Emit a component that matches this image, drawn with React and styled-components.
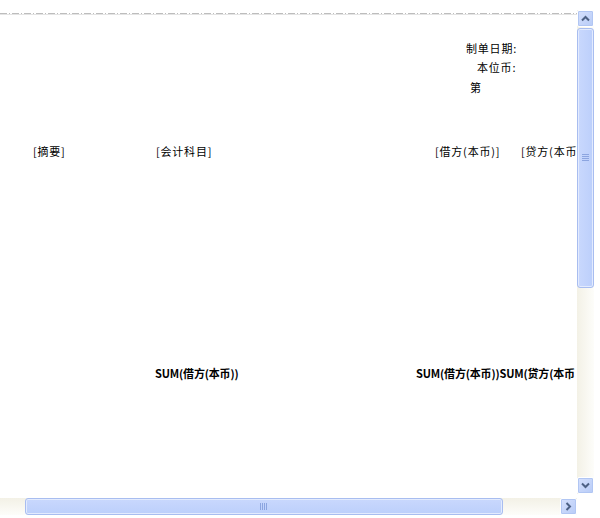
import styled, { createGlobalStyle } from 'styled-components';

const GlobalStyle = createGlobalStyle`
  html, body { margin: 0; padding: 0; background: #fff; }
  body { font-family: "Noto Sans CJK SC", "DejaVu Sans", sans-serif; }
`;

const Frame = styled.div`
  width: 600px;
  height: 518px;
  display: flex;
  flex-direction: column;
  background: #fff;
  overflow: hidden;
`;

const Upper = styled.div`
  display: flex;
  height: 498px;
`;

const Canvas = styled.div`
  position: relative;
  width: 577px;
  height: 100%;
  overflow: hidden;
`;

const PageEdge = styled.div`
  margin-top: 13px;
  height: 1px;
  width: 577px;
  background-image: repeating-linear-gradient(
    to right,
    #bdbdbd 0 7px,
    transparent 7px 9px,
    #bdbdbd 9px 10px,
    transparent 10px 12px
  );
  border-bottom: 1px solid #e4e4e4;
`;

const Field = styled.div`
  position: absolute;
  left: ${(p) => p.x}px;
  top: ${(p) => p.y}px;
  font-size: 11px;
  line-height: 12px;
  color: #000;
  white-space: nowrap;
  font-weight: ${(p) => (p.bold ? 700 : 400)};
  letter-spacing: ${(p) => (p.bold ? '-0.15px' : '0.8px')};
`;

const VBar = styled.div`
  width: 17px;
  margin-top: 10px;
  height: 484px;
  display: flex;
  flex-direction: column;
  background: linear-gradient(to right, #f3f1e6, #fdfdfa);
`;

const HBar = styled.div`
  width: 577px;
  height: 17px;
  display: flex;
  background: linear-gradient(to bottom, #f3f1e6, #fdfdfa);
`;

const ArrowBtn = styled.div`
  width: 17px;
  height: 17px;
  flex: none;
  box-sizing: border-box;
  border: 1px solid #fff;
  border-radius: 2px;
  background: linear-gradient(135deg, #d6e1fd, #b7cbf7);
  box-shadow: inset 0 0 0 1px #b1c6f3;
  display: flex;
  align-items: center;
  justify-content: center;
`;

const Thumb = styled.div`
  box-sizing: border-box;
  border: 1px solid #a8bdf0;
  border-radius: 3px;
  background: ${(p) =>
    p.vertical
      ? 'linear-gradient(to right, #c9d8fd, #bccffb)'
      : 'linear-gradient(to bottom, #c9d8fd, #bccffb)'};
  box-shadow: inset 0 0 0 1px #e3ebfe;
  display: flex;
  align-items: center;
  justify-content: center;
  flex: none;
  ${(p) => (p.vertical ? 'height: 260px; width: 17px;' : 'width: 478px; height: 17px;')}
`;

const Track = styled.div`
  flex: ${(p) => (p.size ? `0 0 ${p.size}px` : '1')};
`;

const Chevron = ({ dir }) => {
  const rot = { up: 0, down: 180, right: 90 }[dir];
  return (
    <svg width="9" height="9" viewBox="0 0 9 9" style={{ transform: `rotate(${rot}deg)` }}>
      <path d="M1 6.5 L4.5 3 L8 6.5" fill="none" stroke="#4d6185" strokeWidth="2" />
    </svg>
  );
};

const Grip = ({ vertical }) => (
  <svg width="8" height="8" viewBox="0 0 8 8">
    {[0, 2, 4, 6].map((o) =>
      vertical ? (
        <line key={o} x1="0" x2="7" y1={o + 0.5} y2={o + 0.5} stroke="#8ca5e0" strokeWidth="1" />
      ) : (
        <line key={o} y1="0" y2="7" x1={o + 0.5} x2={o + 0.5} stroke="#8ca5e0" strokeWidth="1" />
      )
    )}
  </svg>
);

// the last fields run past the visible page edge, so only their visible part is shown
const fields = [
  { x: 466, y: 42, t: '制单日期:' },
  { x: 477, y: 61, t: '本位币:' },
  { x: 470, y: 81, t: '第' },
  { x: 33, y: 145, t: '[摘要]' },
  { x: 156, y: 145, t: '[会计科目]' },
  { x: 435, y: 145, t: '[借方(本币)]' },
  { x: 521, y: 145, t: '[贷方(本币' },
  { x: 155, y: 367, t: 'SUM(借方(本币))', bold: true },
  { x: 416, y: 367, t: 'SUM(借方(本币))SUM(贷方(本币', bold: true },
];

export default function App() {
  return (
    <Frame>
      <GlobalStyle />
      <Upper>
        <Canvas>
          <PageEdge />
          {fields.map((f) => (
            <Field key={f.t + f.x} x={f.x} y={f.y} bold={f.bold}>
              {f.t}
            </Field>
          ))}
        </Canvas>
        <VBar>
          <ArrowBtn>
            <Chevron dir="up" />
          </ArrowBtn>
          <Track size={1} />
          <Thumb vertical>
            <Grip vertical />
          </Thumb>
          <Track />
          <ArrowBtn>
            <Chevron dir="down" />
          </ArrowBtn>
        </VBar>
      </Upper>
      <HBar>
        <Track size={25} />
        <Thumb>
          <Grip />
        </Thumb>
        <Track />
        <ArrowBtn>
          <Chevron dir="right" />
        </ArrowBtn>
      </HBar>
    </Frame>
  );
}
